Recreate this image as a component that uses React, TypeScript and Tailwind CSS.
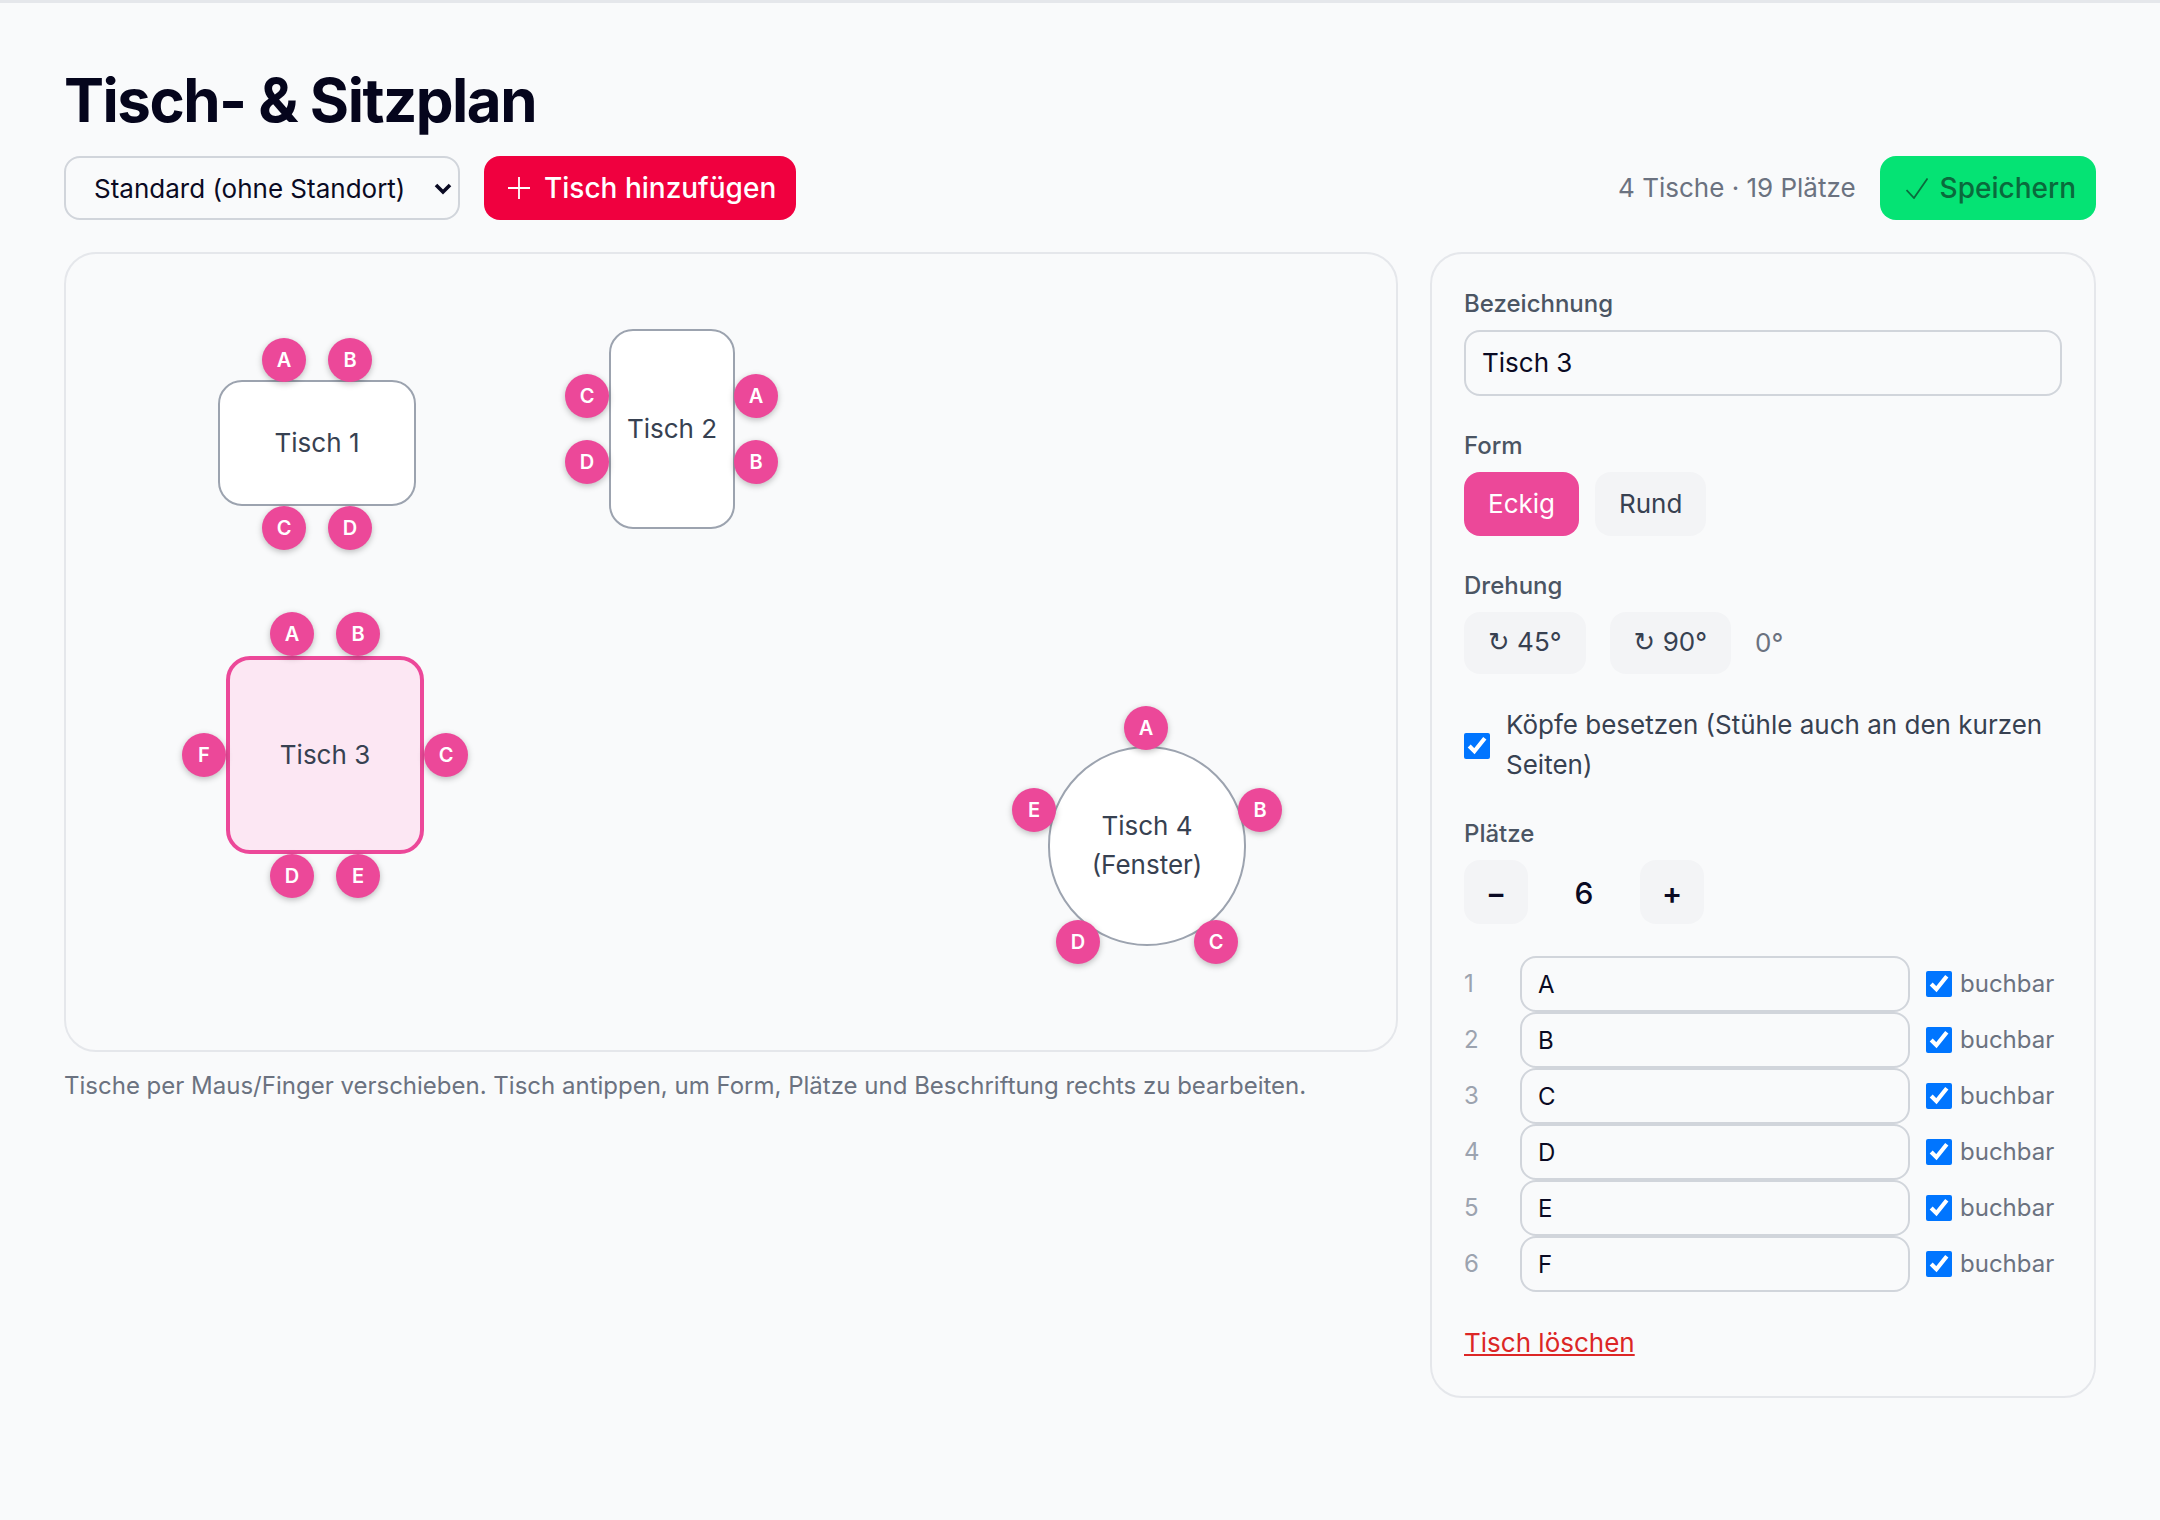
type Chair = { label: string; x: number; y: number }
type Table = {
  name: string[]
  x: number
  y: number
  w: number
  h: number
  round?: boolean
  selected?: boolean
  chairs: Chair[]
}

// page coordinates of the centres, converted to canvas offsets below
const ORIGIN_X = 66
const ORIGIN_Y = 254

const tables: Table[] = [
  {
    name: ['Tisch 1'], x: 218, y: 380, w: 198, h: 126,
    chairs: [
      { label: 'A', x: 284, y: 360 },
      { label: 'B', x: 350, y: 360 },
      { label: 'C', x: 284, y: 528 },
      { label: 'D', x: 350, y: 528 },
    ],
  },
  {
    name: ['Tisch 2'], x: 609, y: 329, w: 126, h: 200,
    chairs: [
      { label: 'C', x: 587, y: 396 },
      { label: 'D', x: 587, y: 462 },
      { label: 'A', x: 756, y: 396 },
      { label: 'B', x: 756, y: 462 },
    ],
  },
  {
    name: ['Tisch 3'], x: 226, y: 656, w: 198, h: 198, selected: true,
    chairs: [
      { label: 'A', x: 292, y: 634 },
      { label: 'B', x: 358, y: 634 },
      { label: 'C', x: 446, y: 755 },
      { label: 'D', x: 292, y: 876 },
      { label: 'E', x: 358, y: 876 },
      { label: 'F', x: 204, y: 755 },
    ],
  },
  {
    name: ['Tisch 4', '(Fenster)'], x: 1048, y: 746, w: 198, h: 200, round: true,
    chairs: [
      { label: 'A', x: 1146, y: 728 },
      { label: 'B', x: 1260, y: 810 },
      { label: 'C', x: 1216, y: 942 },
      { label: 'D', x: 1078, y: 942 },
      { label: 'E', x: 1034, y: 810 },
    ],
  },
]

const seats = ['A', 'B', 'C', 'D', 'E', 'F']

function TableNode({ table }: { table: Table }) {
  return (
    <>
      <div
        className={`absolute flex flex-col items-center justify-center pb-[2px] text-center text-[26px] leading-[39px] text-[#374151] ${
          table.selected ? 'border-4 border-[#ec4899] bg-[#fce7f3]' : 'border-2 border-[#9ca3af] bg-white'
        } ${table.round ? 'rounded-full' : 'rounded-[24px]'}`}
        style={{ left: table.x - ORIGIN_X, top: table.y - ORIGIN_Y, width: table.w, height: table.h }}
      >
        {table.name.map(line => (
          <span key={line}>{line}</span>
        ))}
      </div>
      {table.chairs.map(chair => (
        <div
          key={chair.label}
          className="absolute flex h-[44px] w-[44px] items-center justify-center rounded-full bg-[#ec4899] text-[20px] font-semibold text-white shadow-[0_2px_6px_rgba(0,0,0,0.25)]"
          style={{ left: chair.x - 22 - ORIGIN_X, top: chair.y - 22 - ORIGIN_Y }}
        >
          {chair.label}
        </div>
      ))}
    </>
  )
}

export default function App() {
  return (
    <div className="min-h-screen border-t-[3px] border-[#e5e7eb] bg-[#f9fafb] px-16 pt-[61px] font-['Inter',sans-serif] text-[#0a0a23]">
      <h1 className="mb-5 h-[72px] text-[60px] font-bold leading-[72px] tracking-[-1.5px] text-[#05051c]">Tisch- &amp; Sitzplan</h1>

      <div className="mb-8 flex items-center">
        <div className="relative mr-6">
          <select className="h-[64px] w-[396px] appearance-none rounded-[16px] border-2 border-[#d1d5db] bg-transparent pl-[28px] text-[26px] leading-[39px]">
            <option>Standard (ohne Standort)</option>
          </select>
          <svg width="18" height="12" viewBox="0 0 18 12" fill="none" stroke="currentColor" strokeWidth="3.6" className="absolute right-[8px] top-[27px]">
            <path d="M2 2l7 7 7-7" />
          </svg>
        </div>
        <button className="flex h-[64px] items-center gap-[14px] rounded-[16px] bg-[#f0003f] pl-6 pr-5 text-[28px] font-medium leading-[40px] text-white">
          <svg width="22" height="22" viewBox="0 0 22 22" fill="none" stroke="currentColor" strokeWidth="1.8">
            <path d="M11 0v22M0 11h22" />
          </svg>
          Tisch hinzufügen
        </button>
        <span className="mb-[2px] ml-auto mr-6 text-[26px] text-[#6b7280]">4 Tische · 19 Plätze</span>
        <button className="flex h-[64px] items-center gap-[12px] rounded-[16px] bg-[#05e374] pl-[26px] pr-5 text-[28px] font-medium leading-[40px] text-[#0a6a3c]">
          <svg width="22" height="21" viewBox="0 0 22 21" fill="none" stroke="currentColor" strokeWidth="1.8">
            <path d="M0.5 12l7.5 8L21.5 0.5" />
          </svg>
          Speichern
        </button>
      </div>

      <div className="grid grid-cols-[1334px_1fr] items-start gap-8">
        <div>
          <div className="relative h-[800px] rounded-[32px] border-2 border-[#e5e7eb] bg-[#f9fafb]">
            {tables.map(table => (
              <TableNode key={table.name[0]} table={table} />
            ))}
          </div>
          <p className="mt-4 text-[24px] leading-[36px] text-[#6b7280]">
            Tische per Maus/Finger verschieben. Tisch antippen, um Form, Plätze und Beschriftung rechts zu bearbeiten.
          </p>
        </div>

        <div className="rounded-[32px] border-2 border-[#e5e7eb] px-8 pb-[34px] pt-[32px]">
          <label className="mb-[8px] block text-[24px] font-medium leading-[36px] text-[#4b5563]">Bezeichnung</label>
          <input
            defaultValue="Tisch 3"
            className="mb-[32px] block h-[66px] w-full rounded-[16px] border-2 border-[#d1d5db] bg-transparent px-[16px] pb-[2px] text-[26px] outline-none"
          />

          <label className="mb-[8px] block text-[24px] font-medium leading-[36px] text-[#4b5563]">Form</label>
          <div className="mb-[32px] flex gap-4">
            <button className="h-[64px] rounded-[16px] bg-[#ec4899] px-6 pb-[2px] text-[26px] text-white">Eckig</button>
            <button className="h-[64px] rounded-[16px] bg-[#f3f4f6] px-6 pb-[2px] text-[26px] text-[#374151]">Rund</button>
          </div>

          <label className="mb-[8px] block text-[24px] font-medium leading-[36px] text-[#4b5563]">Drehung</label>
          <div className="mb-[32px] flex items-center gap-6">
            <button className="h-[62px] rounded-[16px] bg-[#f3f4f6] px-6 pb-[2px] text-[26px] text-[#374151]">
              <span className="font-['DejaVu_Sans',sans-serif]">↻</span> 45°
            </button>
            <button className="h-[62px] rounded-[16px] bg-[#f3f4f6] px-6 pb-[2px] text-[26px] text-[#374151]">
              <span className="font-['DejaVu_Sans',sans-serif]">↻</span> 90°
            </button>
            <span className="pb-[2px] text-[26px] text-[#6b7280]">0°</span>
          </div>

          <label className="mb-[31px] flex items-center gap-4 text-[26px] leading-[40px] text-[#374151]">
            <input type="checkbox" defaultChecked className="h-[26px] w-[26px] shrink-0" />
            <span className="mt-[-1px]">Köpfe besetzen (Stühle auch an den kurzen Seiten)</span>
          </label>

          <label className="mb-[8px] block text-[24px] font-medium leading-[36px] text-[#4b5563]">Plätze</label>
          <div className="mb-[32px] flex items-center">
            <button className="h-[64px] w-[64px] rounded-[16px] bg-[#f3f4f6] pt-[2px] text-[30px] font-semibold">−</button>
            <span className="w-[112px] pt-[2px] text-center text-[30px] font-medium">6</span>
            <button className="h-[64px] w-[64px] rounded-[16px] bg-[#f3f4f6] pt-[2px] text-[30px] font-semibold">+</button>
          </div>

          <div className="mb-[31px]">
            {seats.map((seat, i) => (
              <div key={seat} className="flex h-[56px] items-center">
                <span className="w-[56px] text-[24px] text-[#9ca3af]">{i + 1}</span>
                <input
                  defaultValue={seat}
                  className="h-[56px] w-[390px] rounded-[16px] border-2 border-[#d1d5db] bg-transparent px-[16px] text-[24px] outline-none"
                />
                <label className="ml-4 flex items-center gap-[8px] text-[24px] text-[#6b7280]">
                  <input type="checkbox" defaultChecked className="h-[26px] w-[26px]" />
                  buchbar
                </label>
              </div>
            ))}
          </div>

          <button className="block text-[26px] leading-[39px] text-[#dc2626] underline">Tisch löschen</button>
        </div>
      </div>
    </div>
  )
}
